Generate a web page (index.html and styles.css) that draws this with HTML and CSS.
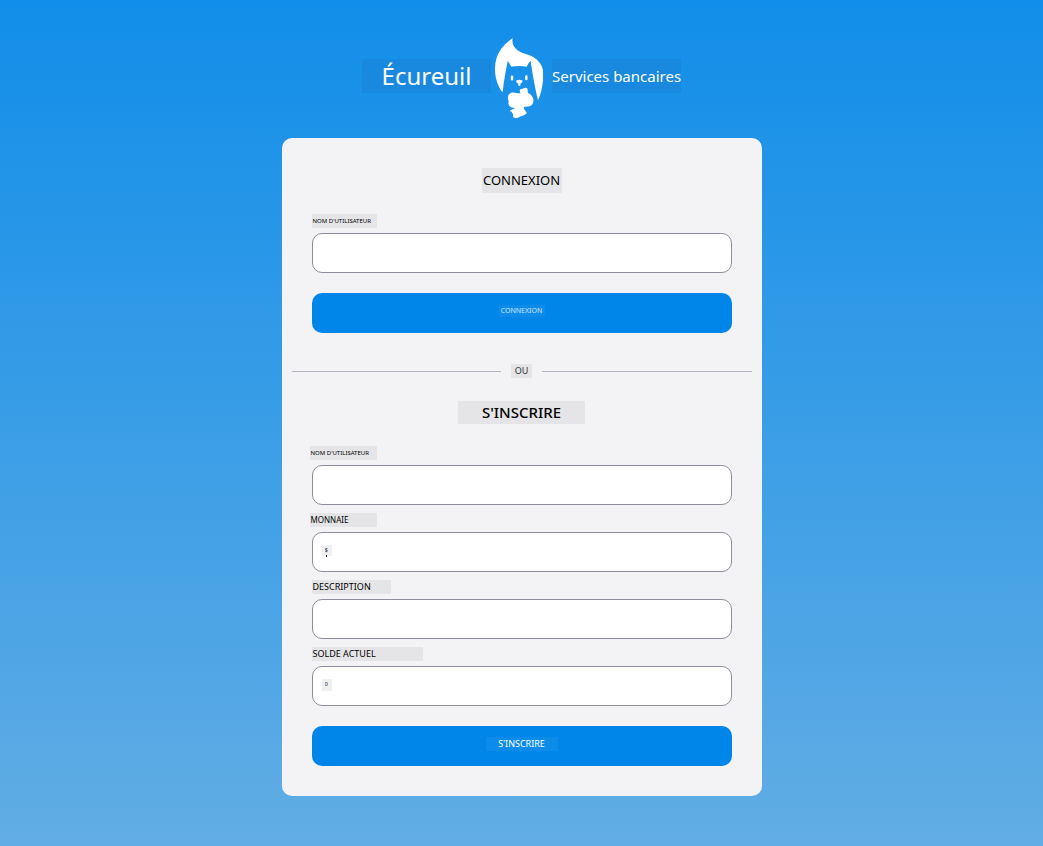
FILE: index.html
```html
<!DOCTYPE html>
<html lang="fr">
<head>
<meta charset="utf-8">
<meta name="viewport" content="width=device-width, initial-scale=1">
<title>Écureuil – Services bancaires</title>
<link rel="stylesheet" href="styles.css">
</head>
<body>
<header class="brand">
  <span class="brand-name">Écureuil</span>
  <svg class="logo" viewBox="45 24 144 240" aria-hidden="true">
    <path d="M98 24C76 40 45 66 45 116C45 146 55 172 68 187C70 165 76 130 83 93C87 98 91 104 94 110Q118 106 140 110C143 103 147 97 152 92C157 130 166 178 174 211C184 190 190 160 190 130C189 104 172 84 146 75C120 67 92 56 98 24Z"/>
    <ellipse cx="96" cy="144" rx="4" ry="8"/>
    <ellipse cx="139" cy="143" rx="4" ry="8"/>
    <path d="M108 152Q118 147 128 152Q127 159 121 161V167H115V161Q109 159 108 152Z"/>
    <path d="M119 181Q120 176 127 176L136 173Q143 172 143 179L144 189C155 194 162 204 160 214C159 228 148 231 133 230C130 233 131 237 135 241L140 248C138 256 127 256 120 260C112 265 103 265 99 260C100 251 97 246 90 243C91 238 101 240 104 234C89 233 83 224 86 214C81 203 84 191 94 188C104 185 112 191 121 190Z"/>
  </svg>
  <span class="brand-tagline">Services bancaires</span>
</header>
<main class="card">
  <form class="form">
    <h1 class="title title-login">CONNEXION</h1>
    <div class="field">
      <label class="label label-tiny" for="login-user">NOM D'UTILISATEUR</label>
      <input class="input" id="login-user" type="text">
    </div>
    <button class="button" type="button"><span class="button-text button-text-small">CONNEXION</span></button>
  </form>
  <div class="divider"><span class="divider-text">OU</span></div>
  <form class="form">
    <h2 class="title title-signup">S'INSCRIRE</h2>
    <div class="field">
      <label class="label label-tiny label-out" for="user">NOM D'UTILISATEUR</label>
      <input class="input" id="user" type="text">
    </div>
    <div class="field">
      <label class="label label-currency" for="currency">MONNAIE</label>
      <input class="input input-filled input-currency" id="currency" type="text" value="$">
    </div>
    <div class="field">
      <label class="label label-description" for="description">DESCRIPTION</label>
      <input class="input" id="description" type="text">
    </div>
    <div class="field">
      <label class="label label-balance" for="balance">SOLDE ACTUEL</label>
      <input class="input input-filled" id="balance" type="text" value="0">
    </div>
    <button class="button" type="button"><span class="button-text">S'INSCRIRE</span></button>
  </form>
</main>
</body>
</html>
```
FILE: styles.css
```css
* {
  box-sizing: border-box;
}

body {
  margin: 0;
  min-height: 100vh;
  padding: 38px 20px 50px;
  background: linear-gradient(#118ee9, #62ade4);
  font-family: "Noto Sans", "Open Sans", sans-serif;
  color: #000;
}

.brand {
  display: flex;
  justify-content: center;
  align-items: center;
  margin-bottom: 20px;
  color: #fff;
}

.brand-name,
.brand-tagline {
  width: 129px;
  height: 34px;
  margin-bottom: 4px;
  line-height: 34px;
  text-align: center;
  white-space: nowrap;
  background: #1889de;
}

.brand-name {
  font-size: 24px;
}

.brand-tagline {
  font-size: 15px;
}

.logo {
  width: 48px;
  height: 80px;
  margin: 0 9px 0 4px;
  fill: #fff;
}

.card {
  max-width: 480px;
  margin: 0 auto;
  padding: 30px;
  border-radius: 10px;
  background: #f3f3f5;
}

.form {
  display: flex;
  flex-direction: column;
}

.title {
  align-self: center;
  margin: 0;
  background: #e5e5e7;
  font-weight: 500;
  text-align: center;
}

.title-login {
  width: 80px;
  margin-bottom: 13px;
  font-size: 13px;
  font-weight: 400;
  line-height: 25px;
}

.title-signup {
  width: 127px;
  margin-bottom: 14px;
  font-size: 15px;
  line-height: 23px;
}

.field {
  display: grid;
  grid-template-rows: 27px 40px;
  justify-items: start;
  align-items: end;
}

.label {
  padding-left: 1px;
  margin-bottom: 5px;
  background: #e5e5e7;
  font-size: 9px;
  line-height: 14px;
  white-space: nowrap;
}

.label-tiny {
  width: 65px;
  font-size: 6px;
}

.label-out {
  width: 67px;
  margin-left: -2px;
}

.label-currency {
  width: 67px;
  margin-left: -2px;
  font-size: 8px;
}

.label-description {
  width: 79px;
}

.label-balance {
  width: 111px;
}

.input {
  width: 100%;
  height: 40px;
  padding: 0 12px;
  border: 1px solid #8d8d9f;
  border-radius: 10px;
  background: #fff;
  font: inherit;
  font-size: 16px;
}

.input-filled {
  padding-bottom: 4px;
  background: linear-gradient(#f0f0f0, #f0f0f0) 9px 12px / 10px 12px no-repeat #fff;
  color: #222;
  font-size: 6px;
}

.input-currency {
  background:
    linear-gradient(#222, #222) 13px 22px / 1px 2px no-repeat,
    linear-gradient(#f0f0f0, #f0f0f0) 9px 12px / 10px 11px no-repeat #fff;
}

.button {
  display: flex;
  justify-content: center;
  align-items: center;
  height: 40px;
  margin-top: 20px;
  padding: 0 0 4px;
  border: 0;
  border-radius: 10px;
  background: #0086e8;
  color: #fff;
  font: inherit;
}

.button-text {
  width: 72px;
  background: #0d8be8;
  font-size: 9px;
  line-height: 14px;
}

.button-text-small {
  width: 46px;
  color: #cfe9fb;
  font-size: 7px;
  line-height: 12px;
}

.divider {
  display: flex;
  align-items: center;
  gap: 10px;
  height: 14px;
  margin: 31px -20px 23px;
}

.divider::before,
.divider::after {
  content: "";
  flex: 1;
  height: 1px;
  background: #b4b4c0;
}

.divider-text {
  width: 21px;
  background: #e5e5e7;
  color: #333;
  font-size: 9px;
  line-height: 14px;
  text-align: center;
}
```
